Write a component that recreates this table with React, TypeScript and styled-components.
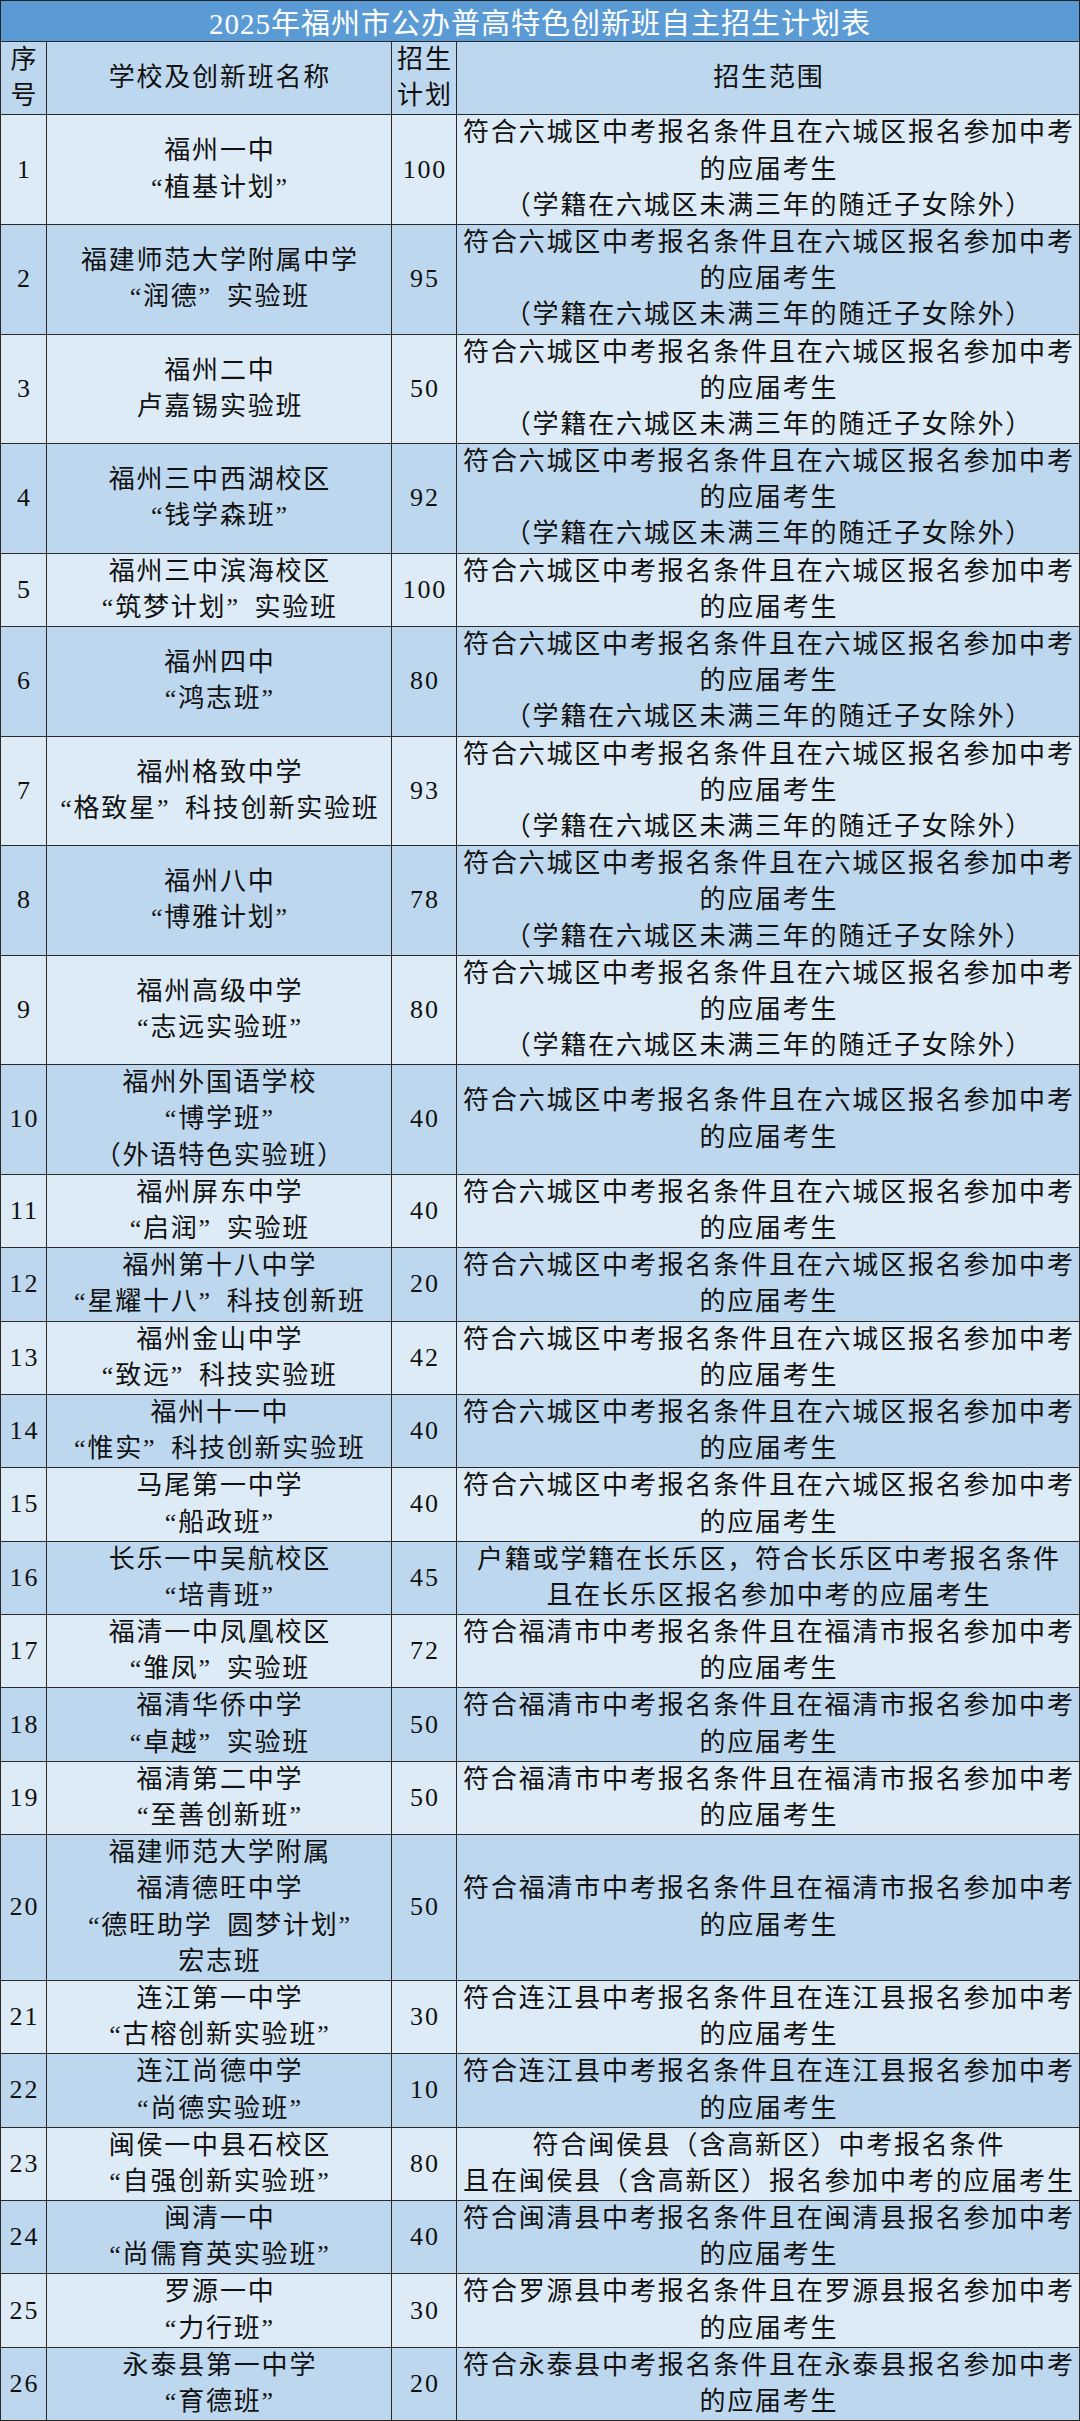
import React from "react";
import styled, { createGlobalStyle } from "styled-components";

const GlobalStyle = createGlobalStyle`
  html, body {
    margin: 0;
    padding: 0;
    background: #ffffff;
  }
  body {
    font-family: "Liberation Serif", "Noto Sans CJK SC", serif;
    color: #111111;
  }
`;

const Sheet = styled.div`
  width: 1080px;
`;

const TitleBar = styled.div`
  box-sizing: border-box;
  height: 41px;
  background: #5b9bd5;
  border: 1px solid #222;
  border-bottom: none;
  display: flex;
  align-items: center;
  justify-content: center;
  color: #ffffff;
  font-size: 29px;
  letter-spacing: 1px;
`;

const Table = styled.table`
  width: 1080px;
  border-collapse: collapse;
  table-layout: fixed;
`;

const Row = styled.tr<{ $dark: boolean }>`
  background: ${(p) => (p.$dark ? "#bdd7ee" : "#ddebf7")};
`;

const Cell = styled.td`
  border: 1px solid #2a2a2a;
  padding: 0;
  text-align: center;
  vertical-align: middle;
`;

const Line = styled.div`
  height: 36.2px;
  line-height: 36.2px;
  white-space: pre;
  font-size: 26px;
  letter-spacing: 1.8px;
  padding-left: 1.8px;
`;

interface School {
  no: number;
  name: string[];
  plan: number;
  scope: string[];
}

const six3 = [
  "符合六城区中考报名条件且在六城区报名参加中考",
  "的应届考生",
  "（学籍在六城区未满三年的随迁子女除外）",
];
const six2 = ["符合六城区中考报名条件且在六城区报名参加中考", "的应届考生"];
const fuqing = ["符合福清市中考报名条件且在福清市报名参加中考", "的应届考生"];
const county = (c: string) => [
  `符合${c}中考报名条件且在${c}报名参加中考`,
  "的应届考生",
];

const schools: School[] = [
  { no: 1, name: ["福州一中", "“植基计划”"], plan: 100, scope: six3 },
  { no: 2, name: ["福建师范大学附属中学", "“润德”\u2002实验班"], plan: 95, scope: six3 },
  { no: 3, name: ["福州二中", "卢嘉锡实验班"], plan: 50, scope: six3 },
  { no: 4, name: ["福州三中西湖校区", "“钱学森班”"], plan: 92, scope: six3 },
  { no: 5, name: ["福州三中滨海校区", "“筑梦计划”\u2002实验班"], plan: 100, scope: six2 },
  { no: 6, name: ["福州四中", "“鸿志班”"], plan: 80, scope: six3 },
  { no: 7, name: ["福州格致中学", "“格致星”\u2002科技创新实验班"], plan: 93, scope: six3 },
  { no: 8, name: ["福州八中", "“博雅计划”"], plan: 78, scope: six3 },
  { no: 9, name: ["福州高级中学", "“志远实验班”"], plan: 80, scope: six3 },
  { no: 10, name: ["福州外国语学校", "“博学班”", "（外语特色实验班）"], plan: 40, scope: six2 },
  { no: 11, name: ["福州屏东中学", "“启润”\u2002实验班"], plan: 40, scope: six2 },
  { no: 12, name: ["福州第十八中学", "“星耀十八”\u2002科技创新班"], plan: 20, scope: six2 },
  { no: 13, name: ["福州金山中学", "“致远”\u2002科技实验班"], plan: 42, scope: six2 },
  { no: 14, name: ["福州十一中", "“惟实”\u2002科技创新实验班"], plan: 40, scope: six2 },
  { no: 15, name: ["马尾第一中学", "“船政班”"], plan: 40, scope: six2 },
  {
    no: 16,
    name: ["长乐一中吴航校区", "“培青班”"],
    plan: 45,
    scope: ["户籍或学籍在长乐区，符合长乐区中考报名条件", "且在长乐区报名参加中考的应届考生"],
  },
  { no: 17, name: ["福清一中凤凰校区", "“雏凤”\u2002实验班"], plan: 72, scope: fuqing },
  { no: 18, name: ["福清华侨中学", "“卓越”\u2002实验班"], plan: 50, scope: fuqing },
  { no: 19, name: ["福清第二中学", "“至善创新班”"], plan: 50, scope: fuqing },
  {
    no: 20,
    name: ["福建师范大学附属", "福清德旺中学", "“德旺助学\u2002圆梦计划”", "宏志班"],
    plan: 50,
    scope: fuqing,
  },
  { no: 21, name: ["连江第一中学", "“古榕创新实验班”"], plan: 30, scope: county("连江县") },
  { no: 22, name: ["连江尚德中学", "“尚德实验班”"], plan: 10, scope: county("连江县") },
  {
    no: 23,
    name: ["闽侯一中县石校区", "“自强创新实验班”"],
    plan: 80,
    scope: ["符合闽侯县（含高新区）中考报名条件", "且在闽侯县（含高新区）报名参加中考的应届考生"],
  },
  { no: 24, name: ["闽清一中", "“尚儒育英实验班”"], plan: 40, scope: county("闽清县") },
  { no: 25, name: ["罗源一中", "“力行班”"], plan: 30, scope: county("罗源县") },
  { no: 26, name: ["永泰县第一中学", "“育德班”"], plan: 20, scope: county("永泰县") },
];

const Lines: React.FC<{ lines: string[] }> = ({ lines }) => (
  <>
    {lines.map((t, i) => (
      <Line key={i}>{t}</Line>
    ))}
  </>
);

export default function App() {
  return (
    <Sheet>
      <GlobalStyle />
      <TitleBar>2025年福州市公办普高特色创新班自主招生计划表</TitleBar>
      <Table>
        <colgroup>
          <col style={{ width: 46 }} />
          <col style={{ width: 345 }} />
          <col style={{ width: 65 }} />
          <col />
        </colgroup>
        <tbody>
          <Row $dark>
            <Cell>
              <Lines lines={["序", "号"]} />
            </Cell>
            <Cell>
              <Lines lines={["学校及创新班名称"]} />
            </Cell>
            <Cell>
              <Lines lines={["招生", "计划"]} />
            </Cell>
            <Cell>
              <Lines lines={["招生范围"]} />
            </Cell>
          </Row>
          {schools.map((s) => (
            <Row key={s.no} $dark={s.no % 2 === 0}>
              <Cell>
                <Lines lines={[String(s.no)]} />
              </Cell>
              <Cell>
                <Lines lines={s.name} />
              </Cell>
              <Cell>
                <Lines lines={[String(s.plan)]} />
              </Cell>
              <Cell>
                <Lines lines={s.scope} />
              </Cell>
            </Row>
          ))}
        </tbody>
      </Table>
    </Sheet>
  );
}
